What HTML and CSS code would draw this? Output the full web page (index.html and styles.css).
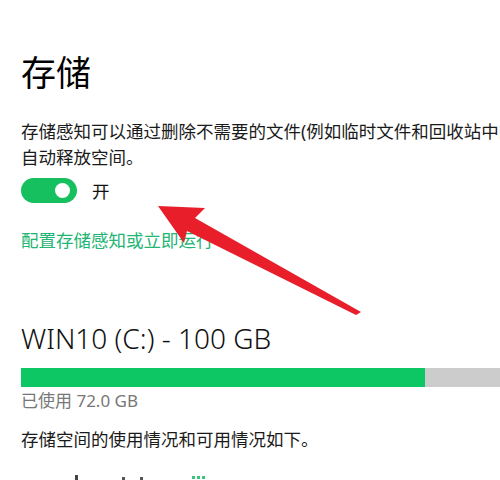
FILE: index.html
```html
<!DOCTYPE html>
<html>
<head>
    <meta charset="utf-8">
    <title>存储</title>
    <link rel="stylesheet" href="styles.css">
</head>
<body>
<div class="page">
    <h1 class="page-title">存储</h1>
    <p class="sense-desc">存储感知可以通过删除不需要的文件(例如临时文件和回收站中的内容)<br>自动释放空间。</p>
    <div class="toggle-row">
        <span class="toggle on"><span class="knob"></span></span>
        <span class="toggle-label">开</span>
    </div>
    <a class="sense-link" href="#">配置存储感知或立即运行</a>

    <h2 class="drive-title">WIN10 (C:) - 100 GB</h2>
    <div class="usage-bar">
        <div class="usage-used" style="width: 404px"></div>
    </div>
    <div class="usage-info">
        <span>已使用 72.0 GB</span>
        <span>27.9 GB 可用</span>
    </div>
    <p class="usage-desc">存储空间的使用情况和可用情况如下。</p>
    <div class="peek-row">
        <span class="peek-mark"></span>
        <span class="peek-mark wide"></span>
        <span class="peek-dots"></span>
    </div>
</div>

<svg class="arrow" width="500" height="480" viewBox="0 0 500 480">
    <polygon fill="#e81f2b" points="158,206 205,208 195,218 361,312 356,315 187,231 184,243"/>
</svg>
</body>
</html>
```

FILE: styles.css
```css
html, body{
    margin: 0;
    padding: 0;
    background: #fff;
    overflow: hidden;
}
body{
    font-family: "Noto Sans", "Noto Sans CJK SC", sans-serif;
    color: #1a1a1a;
}
.page{
    padding: 51px 0 0 21px;
    width: 620px;
}
.page-title{
    margin: 0;
    font-size: 35px;
    font-weight: normal;
    line-height: 44px;
    color: #000;
}
.sense-desc{
    margin: 23px 0 0;
    font-size: 17.5px;
    line-height: 26px;
    white-space: nowrap;
}
.toggle-row{
    display: flex;
    align-items: center;
    margin-top: 8px;
    height: 25px;
}
.toggle{
    position: relative;
    width: 56px;
    height: 25px;
    border-radius: 13px;
    background: #17c05f;
}
.toggle .knob{
    position: absolute;
    top: 5px;
    right: 7px;
    width: 15px;
    height: 15px;
    border-radius: 50%;
    background: #fff;
}
.toggle-label{
    margin-left: 15px;
    font-size: 17.5px;
    color: #111;
}
.sense-link{
    display: block;
    margin-top: 24px;
    font-size: 17.5px;
    line-height: 26px;
    color: #22b573;
    text-decoration: none;
}
.drive-title{
    margin: 68px 0 0;
    font-size: 28px;
    font-weight: 300;
    line-height: 34px;
    color: #111;
}
.usage-bar{
    margin-top: 13px;
    height: 19px;
    background: #cccccc;
}
.usage-used{
    height: 100%;
    background: #0cc763;
}
.usage-info{
    display: flex;
    justify-content: space-between;
    margin-top: 1px;
    font-size: 17px;
    line-height: 26px;
    color: #777;
}
.usage-desc{
    margin: 12px 0 0;
    font-size: 17.5px;
    line-height: 26px;
}
.peek-row{
    display: flex;
    align-items: flex-start;
    height: 20px;
    margin-top: 23px;
}
.peek-mark{
    width: 3px;
    height: 5px;
    margin-left: 54px;
    background: #444;
}
.peek-mark.wide{
    width: 24px;
    height: 3px;
    margin: 2px 0 0 44px;
    background: linear-gradient(90deg, #555 0 3px, transparent 3px 18px, #555 18px 21px, transparent 21px);
}
.peek-dots{
    width: 14px;
    height: 6px;
    margin-left: 45px;
    background: radial-gradient(circle, #3ec27f 1.5px, transparent 2px) 0 0 / 5px 5px repeat-x;
}
.arrow{
    position: absolute;
    left: 0;
    top: 0;
    pointer-events: none;
}
```
